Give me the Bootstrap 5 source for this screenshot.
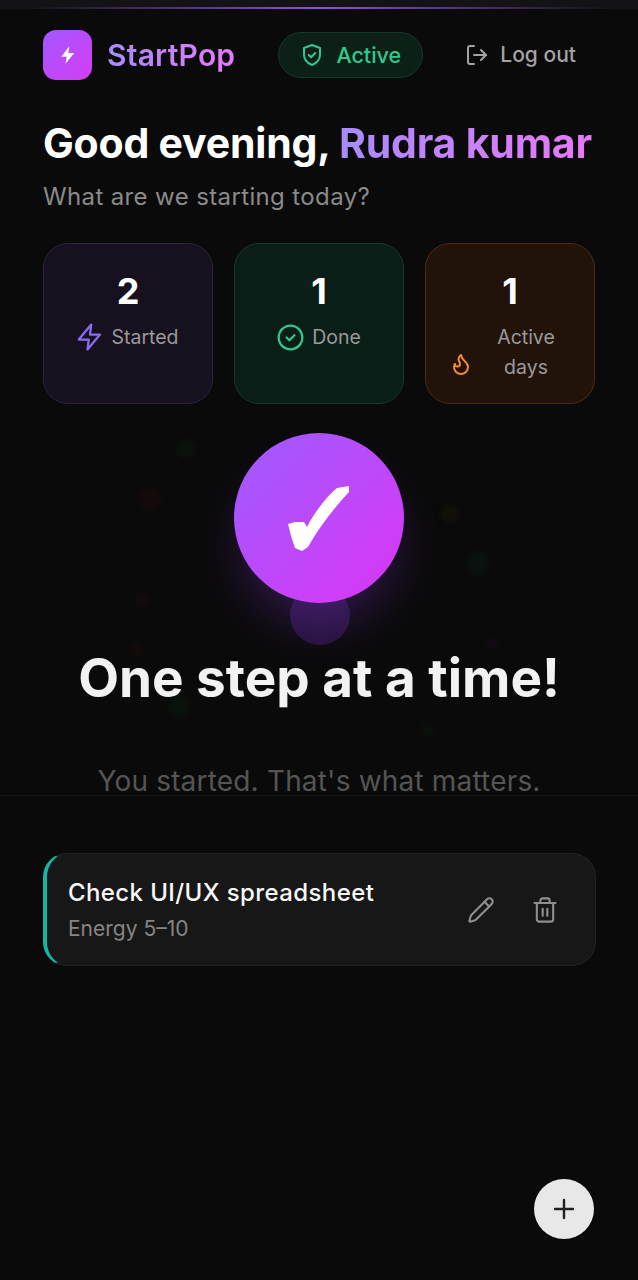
<!DOCTYPE html>
<html lang="en">
<head>
    <meta charset="UTF-8">
    <title>StartPop</title>
    <link href="https://cdn.jsdelivr.net/npm/bootstrap@5.3.0/dist/css/bootstrap.min.css" rel="stylesheet">
    <style>
        html, body { height: 1280px; overflow: hidden; }
        body { background: #0a0a0a; font-family: Inter, "Liberation Sans", sans-serif; color: #fff; position: relative; }
        .top-strip { height: 9px; background: #131315; position: relative; }
        .top-strip::after { content: ""; position: absolute; left: 30px; right: 30px; bottom: 0; height: 2px; background: linear-gradient(90deg, transparent, #8f52d6 50%, transparent); }
        .page-wrap { padding: 21px 42px 0 43px; }
        .brand-box { width: 49px; height: 50px; border-radius: 13px; background: linear-gradient(135deg, #a259ff, #d63bf5); }
        .grad-text { background: linear-gradient(90deg, #a78bfa, #e879f9); -webkit-background-clip: text; background-clip: text; color: transparent; }
        .brand-name { font-size: 30px; font-weight: 600; letter-spacing: .2px; margin-left: 15px; line-height: 50px; white-space: nowrap; }
        .active-pill { width: 145px; height: 46px; margin-left: 43px; margin-top: 2px; border-radius: 23px; background: #0c2018; border: 1.5px solid #14382a; color: #2fc98d; font-size: 21.5px; font-weight: 500; gap: 12px; }
        .logout-link { margin-left: 42px; margin-top: 2px; color: #a3a3a3; font-size: 21px; font-weight: 500; gap: 11px; height: 46px; }
        .hello { font-size: 41px; font-weight: 700; letter-spacing: -0.2px; line-height: 48px; margin: 39px 0 0; white-space: nowrap; }
        .hello-sub { font-size: 24px; letter-spacing: .37px; line-height: 32px; color: #8a8a8a; margin: 14px 0 0; }
        .stat-row { display: grid; grid-template-columns: repeat(3, 170px); column-gap: 21px; margin-top: 30px; }
        .stat-box { height: 161px; border-radius: 25px; border: 1.5px solid; padding-top: 25px; text-align: center; }
        .stat-purple { background: #17101f; border-color: #2d2440; }
        .stat-green { background: #0a1d17; border-color: #143a2c; }
        .stat-orange { background: #22130a; border-color: #4f2a14; }
        .stat-num { font-size: 36px; font-weight: 700; line-height: 44px; }
        .stat-label { color: #9a9a9a; font-size: 19.5px; line-height: 30px; gap: 8px; margin-top: 9px; }
        .zap-icon { margin: 0 -2px; }
        .hero { position: relative; height: 363px; margin: 29px -42px 0 -43px; border-bottom: 1px solid #151515; text-align: center; }
        .burst { position: absolute; border-radius: 50%; filter: blur(2px); }
        .big-circle { position: relative; width: 170px; height: 170px; margin: 0 auto; border-radius: 50%; background: linear-gradient(135deg, #9d5cff, #dc35f5); box-shadow: 0 28px 50px -8px rgba(150, 60, 245, .28); }
        .ghost-circle { position: absolute; left: 290px; top: 152px; width: 60px; height: 60px; border-radius: 50%; background: #26133c; }
        .hero-title { position: relative; font-size: 53px; font-weight: 700; line-height: 62px; color: #f2f2f2; margin: 44px 0 0; white-space: nowrap; }
        .hero-sub { position: relative; font-size: 28px; letter-spacing: .18px; line-height: 28px; color: #555; margin: 58px 0 0; white-space: nowrap; }
        .task-item { height: 113px; margin-top: 57px; border-radius: 24px; background: #171717; border: 1.5px solid #222; border-left: 4px solid #16b5a0; padding: 0 36px 0 21px; }
        .task-name { font-size: 24px; letter-spacing: .4px; font-weight: 500; line-height: 30px; color: #f7f7f7; }
        .task-meta { font-size: 21px; line-height: 26px; color: #858585; margin-top: 8px; }
        .task-tools { gap: 36px; }
        .add-btn { position: absolute; left: 534px; top: 1179px; width: 60px; height: 60px; border-radius: 50%; background: #e8e8e8; border: 0; padding: 0; }
    </style>
</head>
<body>
    <div class="top-strip"></div>

    <div class="page-wrap">
        <!-- Header -->
        <div class="d-flex align-items-start">
            <div class="brand-box d-flex align-items-center justify-content-center flex-shrink-0">
                <svg width="20" height="20" viewBox="0 0 24 24" fill="#fff"><path d="M13.5 1.5 4 14h6.5l-1.5 8.5L19.5 9.5h-7z"/></svg>
            </div>
            <div class="brand-name grad-text">StartPop</div>
            <div class="active-pill d-flex align-items-center justify-content-center flex-shrink-0">
                <svg width="24" height="24" viewBox="0 0 24 24" fill="none" stroke="#2fc98d" stroke-width="2" stroke-linecap="round" stroke-linejoin="round"><path d="M12 2 4 5v6.500c0 5 3.400 8.700 8 10.500 4.600-1.800 8-5.500 8-10.500V5z"/><path d="m8.800 12 2.300 2.300 4.200-4.300"/></svg>
                <span>Active</span>
            </div>
            <div class="logout-link d-flex align-items-center flex-shrink-0">
                <svg width="24" height="24" viewBox="0 0 24 24" fill="none" stroke="#a3a3a3" stroke-width="2" stroke-linecap="round" stroke-linejoin="round"><path d="M9 3H5a2 2 0 0 0-2 2v14a2 2 0 0 0 2 2h4"/><path d="m16 17 5-5-5-5"/><path d="M21 12H9"/></svg>
                <span>Log out</span>
            </div>
        </div>

        <h1 class="hello">Good evening, <span class="grad-text">Rudra kumar</span></h1>
        <p class="hello-sub">What are we starting today?</p>

        <!-- Stats -->
        <div class="stat-row">
            <div class="stat-box stat-purple">
                <div class="stat-num">2</div>
                <div class="stat-label d-flex align-items-center justify-content-center">
                    <svg class="zap-icon" width="30" height="30" viewBox="0 0 24 24" fill="none" stroke="#8b6cf0" stroke-width="1.800" stroke-linecap="round" stroke-linejoin="round"><path d="M13 2 3 14h8l-1 8 10-12h-8z"/></svg>
                    <span>Started</span>
                </div>
            </div>
            <div class="stat-box stat-green">
                <div class="stat-num">1</div>
                <div class="stat-label d-flex align-items-center justify-content-center">
                    <svg width="27" height="27" viewBox="0 0 24 24" fill="none" stroke="#2fc98d" stroke-width="2" stroke-linecap="round" stroke-linejoin="round"><circle cx="12" cy="12" r="10.500"/><path d="m8.500 12 2.500 2.500 4.500-4.500"/></svg>
                    <span>Done</span>
                </div>
            </div>
            <div class="stat-box stat-orange">
                <div class="stat-num">1</div>
                <div class="stat-label d-flex align-items-center justify-content-center">
                    <svg class="mt-4" width="24" height="24" viewBox="0 0 24 24" fill="none" stroke="#f08a2c" stroke-width="2" stroke-linecap="round" stroke-linejoin="round"><path d="M8.500 14.500A2.500 2.500 0 0 0 11 12c0-1.380-.5-2-1-3-1.072-2.143-.224-4.054 2-6 .5 2.500 2 4.900 4 6.500 2 1.600 3 3.500 3 5.500a7 7 0 1 1-14 0c0-1.153.433-2.294 1-3a2.500 2.500 0 0 0 2.500 2.500z"/></svg>
                    <span class="px-3">Active<br>days</span>
                </div>
            </div>
        </div>

        <!-- Celebration -->
        <div class="hero">
            <span class="burst" style="left:176px;top:6px;width:20px;height:20px;background:#0b120c"></span>
            <span class="burst" style="left:138px;top:54px;width:24px;height:24px;background:#130b0b"></span>
            <span class="burst" style="left:441px;top:72px;width:18px;height:18px;background:#12100a"></span>
            <span class="burst" style="left:466px;top:118px;width:24px;height:24px;background:#0a110f"></span>
            <span class="burst" style="left:134px;top:158px;width:17px;height:17px;background:#120b0b"></span>
            <span class="burst" style="left:130px;top:210px;width:14px;height:14px;background:#130b0b"></span>
            <span class="burst" style="left:168px;top:262px;width:22px;height:22px;background:#0a120c"></span>
            <span class="burst" style="left:420px;top:290px;width:14px;height:14px;background:#0a110c"></span>
            <span class="burst" style="left:486px;top:204px;width:12px;height:12px;background:#100b11"></span>
            <span class="ghost-circle"></span>
            <div class="big-circle d-flex align-items-center justify-content-center">
                <svg width="64" height="70" viewBox="0 0 64 70" fill="#fff"><path d="M62 3 50 5C40 13 27 30 20 44L17 39 8 39 1 41 4 53 8 65 15 68 21 64C32 44 48 24 62 9z"/></svg>
            </div>
            <h2 class="hero-title">One step at a time!</h2>
            <p class="hero-sub">You started. That's what matters.</p>
        </div>

        <!-- Task -->
        <div class="task-item d-flex align-items-center justify-content-between">
            <div>
                <div class="task-name">Check UI/UX spreadsheet</div>
                <div class="task-meta">Energy 5–10</div>
            </div>
            <div class="task-tools d-flex align-items-center">
                <svg width="28" height="28" viewBox="0 0 24 24" fill="none" stroke="#8f8f8f" stroke-width="1.800" stroke-linecap="round" stroke-linejoin="round"><path d="M21.200 6.800a2.800 2.800 0 0 0-4-4L3.800 16.200a2 2 0 0 0-.5.800l-1.300 4.400a.5.500 0 0 0 .6.600l4.400-1.300a2 2 0 0 0 .8-.5z"/><path d="m15 5 4 4"/></svg>
                <svg width="28" height="28" viewBox="0 0 24 24" fill="none" stroke="#8f8f8f" stroke-width="1.800" stroke-linecap="round" stroke-linejoin="round"><path d="M3 6h18"/><path d="M19 6v14a2 2 0 0 1-2 2H7a2 2 0 0 1-2-2V6"/><path d="M8 6V4a2 2 0 0 1 2-2h4a2 2 0 0 1 2 2v2"/><path d="M10 11v6"/><path d="M14 11v6"/></svg>
            </div>
        </div>
    </div>

    <button class="add-btn d-flex align-items-center justify-content-center" type="button" aria-label="Add">
        <svg width="24" height="24" viewBox="0 0 24 24" fill="none" stroke="#222" stroke-width="2.400" stroke-linecap="round"><path d="M12 3v18"/><path d="M3 12h18"/></svg>
    </button>
</body>
</html>
